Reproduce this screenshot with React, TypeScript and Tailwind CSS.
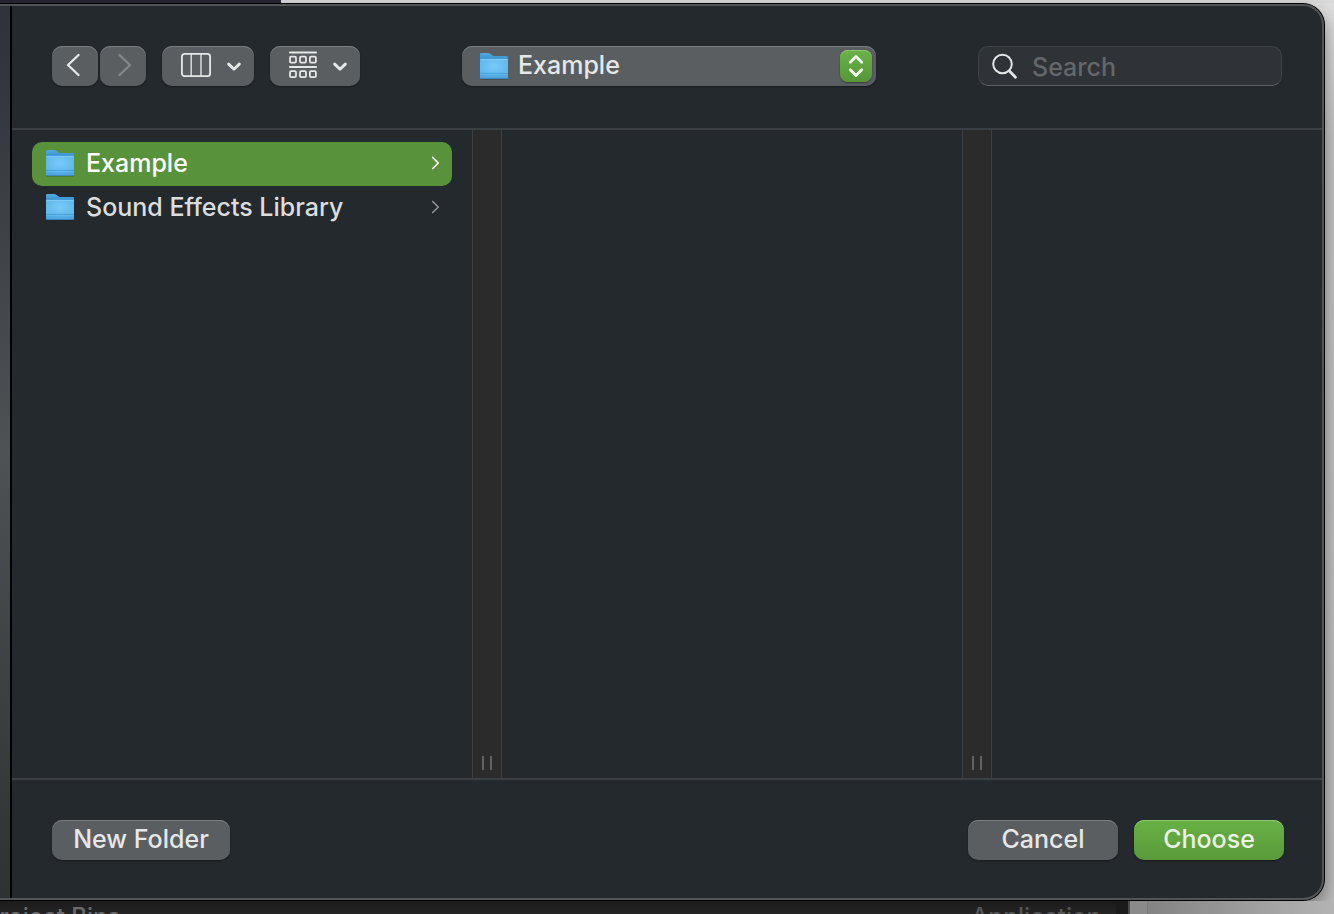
import { useState } from 'react';
import type { ReactNode } from 'react';

interface FolderItem {
  id: string;
  name: string;
}

const folders: FolderItem[] = [
  { id: 'example', name: 'Example' },
  { id: 'sfx', name: 'Sound Effects Library' },
];

const grayButton =
  'flex h-10 items-center rounded-[10px] bg-[#5b5e61] pb-0.5 text-[#e6e7e7] shadow-[inset_0_1px_0_#7b7e80,0_1px_2px_rgba(0,0,0,0.35)]';

function FolderIcon() {
  return (
    <svg width="30" height="30" viewBox="0 0 30 30" className="shrink-0" aria-hidden="true">
      <defs>
        <linearGradient id="folderBack" x1="0" y1="0" x2="0" y2="1">
          <stop offset="0" stopColor="#4fa9de" />
          <stop offset="0.3" stopColor="#3a8fcd" />
          <stop offset="1" stopColor="#3a8fcd" />
        </linearGradient>
        <radialGradient id="folderFront" cx="0.5" cy="0.35" r="0.75">
          <stop offset="0" stopColor="#78cbf8" />
          <stop offset="1" stopColor="#57b0e8" />
        </radialGradient>
      </defs>
      <rect x="1" y="25" width="28" height="3.4" rx="1.4" fill="#000" opacity="0.3" />
      <path
        d="M1 3.2Q1 2 2.2 2H9.4Q10.4 2 11.2 2.7L13.2 4.3Q14 5 15 5H27.8Q29 5 29 6.2V26H1Z"
        fill="url(#folderBack)"
      />
      <path d="M1 9.2Q1 8 2.2 8H27.8Q29 8 29 9.2V26.5Q29 27.7 27.8 27.7H2.2Q1 27.7 1 26.5Z" fill="url(#folderFront)" />
      <path d="M1.5 8.4H28.5" stroke="#86d2fa" strokeWidth="0.8" />
      <path d="M1 22.5H29M1 25H29" stroke="#4499d3" strokeWidth="0.8" />
      <path d="M1.4 27.2H28.6" stroke="#3585c2" strokeWidth="1" />
    </svg>
  );
}

function SmallChevron() {
  return (
    <svg
      width="14"
      height="14"
      viewBox="0 0 14 14"
      fill="none"
      stroke="currentColor"
      strokeWidth="2.9"
      strokeLinecap="round"
      strokeLinejoin="round"
      aria-hidden="true"
    >
      <path d="M1.7 6.1L7 11.2L12.3 6.1" />
    </svg>
  );
}

function ColumnsIcon() {
  return (
    <svg width="30" height="24" viewBox="0 0 30 24" fill="none" stroke="currentColor" aria-hidden="true">
      <rect x="0.9" y="0.9" width="28.2" height="22.2" rx="2.6" strokeWidth="1.8" />
      <path d="M10.2 1V23M20 1V23" strokeWidth="1.6" opacity="0.85" />
    </svg>
  );
}

function GroupIcon() {
  return (
    <svg width="28" height="28" viewBox="0 0 28 28" fill="none" stroke="currentColor" strokeWidth="1.8" aria-hidden="true">
      <path d="M0.9 1.5H27.1M0.9 16H27.1" strokeLinecap="round" />
      {[1, 11, 20.9].map((x) => (
        <g key={x}>
          <rect x={x} y="5.7" width="6" height="6" rx="1.2" />
          <rect x={x} y="20.2" width="6" height="6" rx="1.2" />
        </g>
      ))}
    </svg>
  );
}

function ResizeBar() {
  return (
    <div className="flex w-[30px] shrink-0 cursor-col-resize items-end justify-center gap-1.5 border-x border-[#3e3e3f] bg-[#2b2b2b] pb-2">
      <span className="h-3.5 w-0.5 bg-[#626262]" />
      <span className="h-3.5 w-0.5 bg-[#626262]" />
    </div>
  );
}

function ActionButton({ children, className }: { children: ReactNode; className: string }) {
  return (
    <button type="button" className={`h-10 rounded-[10px] pb-0.5 text-center ${className}`}>
      {children}
    </button>
  );
}

export default function App() {
  const [selected, setSelected] = useState('example');
  const [query, setQuery] = useState('');

  return (
    <div className="flex min-h-screen flex-col overflow-hidden bg-linear-to-b from-[#dedede] via-[#c4c4c4] via-15% to-[#bcbcbc] font-[Inter,'Liberation_Sans',sans-serif] text-[25px] leading-8 font-medium text-[#e3e4e4]">
      {/* windows behind the dialog */}
      <div className="flex h-[3px]">
        <div className="w-[281px] bg-[#262733]" />
        <div className="flex-1 bg-[#d9d9d9]" />
      </div>

      <div className="mr-[9px] flex flex-1 rounded-r-[22px] border-y border-r border-black bg-[#24292d] shadow-[0_8px_18px_rgba(0,0,0,0.4)]">
        <div className="flex flex-1 overflow-hidden rounded-r-[21px] border-y-2 border-r-2 border-[#515557]">
          <div className="w-3 shrink-0 border-r-2 border-black bg-linear-to-b from-[#2f313b] via-[#4e5254] via-50% to-[#2f3233]" />

          <div className="flex min-w-0 flex-1 flex-col">
            <header className="flex items-start justify-between border-b-2 border-[#3b3f43] px-10 pt-10 pb-[42px]">
              <div className="flex gap-4">
                <div className="flex gap-0.5">
                  <button type="button" aria-label="Back" className={`${grayButton} w-[46px] justify-center pr-1`}>
                    <svg width="14" height="24" viewBox="0 0 14 24" fill="none" stroke="currentColor" strokeWidth="2.3" strokeLinecap="round" strokeLinejoin="round">
                      <path d="M12.5 2L2 12L12.5 22" />
                    </svg>
                  </button>
                  <button type="button" aria-label="Forward" disabled className={`${grayButton} w-[46px] justify-center pl-1`}>
                    <svg width="14" height="24" viewBox="0 0 14 24" fill="none" stroke="#83868a" strokeWidth="2.3" strokeLinecap="round" strokeLinejoin="round">
                      <path d="M1.5 2L12 12L1.5 22" />
                    </svg>
                  </button>
                </div>
                <button type="button" aria-label="View" aria-haspopup="menu" className={`${grayButton} w-[92px] justify-between pr-[13px] pl-[19px]`}>
                  <ColumnsIcon />
                  <SmallChevron />
                </button>
                <button type="button" aria-label="Group by" aria-haspopup="menu" className={`${grayButton} w-[90px] justify-between pr-[13px] pl-[19px]`}>
                  <GroupIcon />
                  <SmallChevron />
                </button>
              </div>

              <div className="relative w-[414px]">
                <select
                  aria-label="Location"
                  className={`${grayButton} w-full appearance-none pr-10 pl-14 outline-none`}
                  defaultValue="example"
                >
                  <option value="example">Example</option>
                </select>
                <div className="pointer-events-none absolute inset-y-0 left-[17px] flex items-center">
                  <FolderIcon />
                </div>
                <div className="pointer-events-none absolute top-1 right-1 flex size-8 items-center justify-center rounded-lg bg-linear-to-b from-[#68b346] to-[#569638] shadow-[inset_0_1px_0_#8ac66f,0_1px_2px_rgba(0,0,0,0.4)]">
                  <svg width="16" height="24" viewBox="0 0 16 24" fill="none" stroke="#eef5ea" strokeWidth="2.8" strokeLinecap="round" strokeLinejoin="round" aria-hidden="true">
                    <path d="M2.3 8.2L8 2.6L13.7 8.2M2.3 15.8L8 21.4L13.7 15.8" />
                  </svg>
                </div>
              </div>

              <label className="flex h-10 w-[304px] items-center gap-3.5 rounded-[10px] border border-[#3f4346] border-b-[#5d6063] bg-[#2f3337] pl-3">
                <svg width="27" height="27" viewBox="0 0 27 27" fill="none" stroke="#e3e4e4" strokeLinecap="round" className="shrink-0" aria-hidden="true">
                  <circle cx="11.5" cy="11" r="9.3" strokeWidth="2" />
                  <path d="M18.4 18L24.5 24.2" strokeWidth="2.8" />
                </svg>
                <input
                  type="text"
                  aria-label="Search"
                  placeholder="Search"
                  value={query}
                  onChange={(e) => setQuery(e.target.value)}
                  className="w-full min-w-0 bg-transparent pt-0.5 outline-none placeholder:text-[#64676a]"
                />
              </label>
            </header>

            <main className="flex flex-1">
              <ul className="w-[460px] shrink-0 px-5 pt-3">
                {folders.map((folder) => (
                  <li key={folder.id}>
                    <button
                      type="button"
                      onClick={() => setSelected(folder.id)}
                      className={`flex h-11 w-full items-center rounded-[10px] pr-3 pb-0.5 pl-[13px] text-left ${
                        selected === folder.id ? 'bg-[#58923a] text-white' : 'text-[#dcddde]'
                      }`}
                    >
                      <FolderIcon />
                      <span className="flex-1 pl-[11px]">{folder.name}</span>
                      <svg
                        width="9"
                        height="14"
                        viewBox="0 0 9 14"
                        fill="none"
                        stroke="currentColor"
                        strokeWidth="1.7"
                        strokeLinecap="round"
                        strokeLinejoin="round"
                        className={selected === folder.id ? 'text-white' : 'text-[#8e9193]'}
                        aria-hidden="true"
                      >
                        <path d="M1.7 1.5L7.3 7L1.7 12.5" />
                      </svg>
                    </button>
                  </li>
                ))}
              </ul>
              <ResizeBar />
              <div className="w-[460px] shrink-0" />
              <ResizeBar />
              <div className="flex-1" />
            </main>

            <footer className="flex items-center border-t-2 border-[#3b3f43] pt-10 pr-[38px] pb-[38px] pl-10">
              <ActionButton className="w-[178px] bg-[#5b5e61] text-[#e6e7e7] shadow-[inset_0_1px_0_#7b7e80,0_1px_2px_rgba(0,0,0,0.35)]">
                New Folder
              </ActionButton>
              <div className="ml-auto flex gap-4">
                <ActionButton className="w-[150px] bg-[#5b5e61] text-[#e6e7e7] shadow-[inset_0_1px_0_#7b7e80,0_1px_2px_rgba(0,0,0,0.35)]">
                  Cancel
                </ActionButton>
                <ActionButton className="w-[150px] bg-linear-to-b from-[#68b144] to-[#5a9a3a] text-[#eaf3e6] shadow-[inset_0_1px_0_#8cc772,0_1px_2px_rgba(0,0,0,0.35)]">
                  Choose
                </ActionButton>
              </div>
            </footer>
          </div>
        </div>
      </div>

      <div className="flex h-[13px] overflow-hidden text-2xl leading-6">
        <div className="flex flex-1 justify-between overflow-hidden bg-linear-to-b from-[#1b1b1c] to-[#242425] pt-1 pr-[15px]">
          <span className="-ml-4 text-[#6a6a6b]">Project Bins</span>
          <span className="text-[#555556]">Application</span>
        </div>
        <div className="w-3.5 border-r-2 border-[#4a4a4a] bg-[#1b1b1b]" />
        <div className="w-[18px] border-r border-[#7a7a7a] bg-[#8a8a8a]" />
        <div className="w-[186px] bg-linear-to-r from-[#838383] to-[#b4b4b4]" />
      </div>
    </div>
  );
}
